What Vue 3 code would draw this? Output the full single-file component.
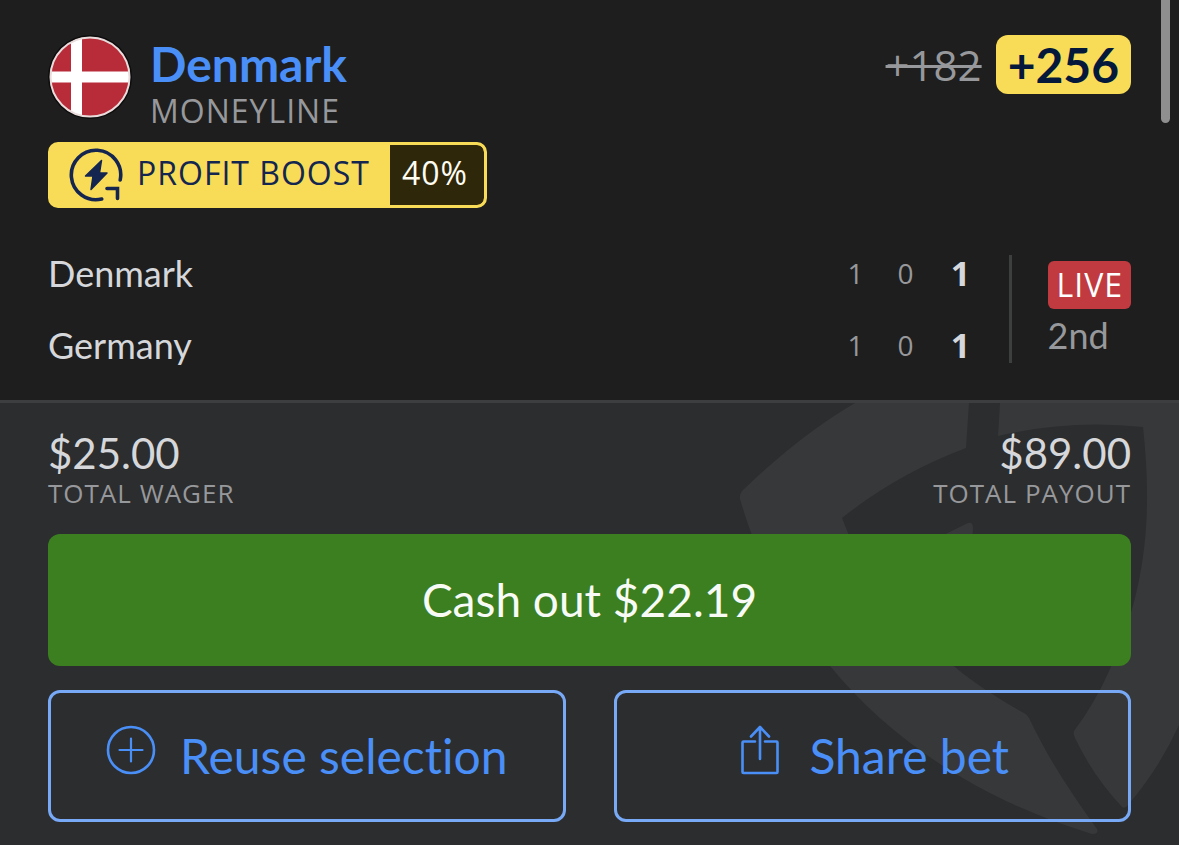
<template>
  <main class="bet-card">
    <section class="selection">
      <header class="selection-head">
        <svg class="flag" viewBox="0 0 84 84" role="img" aria-label="Flag of Denmark">
          <defs>
            <clipPath id="flag-clip"><circle cx="42" cy="42" r="40" /></clipPath>
          </defs>
          <circle cx="42" cy="42" r="42" fill="#0c0c0c" />
          <g clip-path="url(#flag-clip)">
            <rect width="84" height="84" fill="#b82b38" />
            <path d="M23 0h11v84H23zM0 36.500h84v11H0z" fill="#fff" />
          </g>
          <circle cx="42" cy="42" r="39.500" fill="none" stroke="#e9dcdc" stroke-width="2" />
        </svg>
        <div class="pick">
          <h1 class="pick-name">{{ bet.pick }}</h1>
          <p class="caption market">{{ bet.market }}</p>
        </div>
        <div class="odds">
          <s class="odds-old">{{ bet.oldOdds }}</s>
          <strong class="odds-new">{{ bet.newOdds }}</strong>
        </div>
      </header>

      <div class="boost">
        <span class="boost-label">
          <svg class="boost-icon" viewBox="0 0 56 56" fill="none" stroke="#14264f" aria-hidden="true">
            <path d="M32.700 52A24.700 24.700 0 1 1 51.200 33" stroke-width="3.600" stroke-linecap="round" />
            <path d="M38 41.500h10.500v10" stroke-width="3.600" stroke-linecap="round" stroke-linejoin="miter" />
            <path d="M32.500 13.500 16.500 29H24l-2 13.500L38 26h-7.500z" fill="#14264f" stroke-width="1.500" stroke-linejoin="round" />
          </svg>
          <span class="caption">PROFIT BOOST</span>
        </span>
        <span class="caption boost-value">{{ bet.boost }}</span>
      </div>

      <div class="game">
        <table class="scores">
          <tbody>
            <tr v-for="team in teams" :key="team.name">
              <th scope="row">{{ team.name }}</th>
              <td v-for="(score, i) in team.periods" :key="i" class="period">{{ score }}</td>
              <td class="total">{{ team.total }}</td>
            </tr>
          </tbody>
        </table>
        <div class="status">
          <span class="caption live">LIVE</span>
          <span class="half">2nd</span>
        </div>
      </div>
    </section>

    <section class="summary">
      <svg class="watermark" viewBox="700 403 479 442" fill="#373839" aria-hidden="true">
        <path d="M855 403Q800 435 742 491Q739 495 740 499C757 558 785 614 830 666C892 741 978 799 1092 834Q1099 834 1097 829C1072 794 1050 762 1029 718Q1027 714 1022 712C998 698 975 684 955 667C897 631 864 576 842 518Q897 474 966 448L969 403Z" />
        <path d="M920 548Q944 534 968 523Q973 522 973 528L972 548Z" />
        <path d="M1000 403L998 436Q1070 419 1143 427C1152 510 1148 586 1110 669Q1095 703 1074 731Q1073 734 1075 738Q1093 776 1122 807Q1125 809 1128 805Q1159 769 1179 725V403Z" />
      </svg>
      <dl class="amounts">
        <div v-for="item in amounts" :key="item.label" class="amount">
          <dt class="caption amount-label">{{ item.label }}</dt>
          <dd>{{ item.value }}</dd>
        </div>
      </dl>
      <button type="button" class="cash-out">Cash out {{ bet.cashOut }}</button>
      <div class="actions">
        <button type="button" class="action">
          <svg class="action-icon" viewBox="0 0 50 50" fill="none" stroke="currentColor" stroke-width="2.600" stroke-linecap="round" aria-hidden="true">
            <circle cx="25" cy="25" r="23" />
            <path d="M25 13.500v23M13.500 25h23" stroke-width="2.200" />
          </svg>
          <span>Reuse selection</span>
        </button>
        <button type="button" class="action">
          <svg class="action-icon" viewBox="0 0 50 50" fill="none" stroke="currentColor" stroke-width="2.600" stroke-linecap="round" stroke-linejoin="round" aria-hidden="true">
            <path d="M20 16.500H8.500Q7.500 16.500 7.500 17.500V47Q7.500 48 8.500 48H41.500Q42.500 48 42.500 47V17.500Q42.500 16.500 41.500 16.500H30" />
            <path d="M25 34V2.500M16 11.500l9-9.500 9 9.500" />
          </svg>
          <span>Share bet</span>
        </button>
      </div>
    </section>
    <span class="scroll-thumb" aria-hidden="true"></span>
  </main>
</template>

<script setup>
const bet = {
  pick: 'Denmark',
  market: 'MONEYLINE',
  oldOdds: '+182',
  newOdds: '+256',
  boost: '40%',
  cashOut: '$22.19'
}

const teams = [
  { name: 'Denmark', periods: [1, 0], total: 1 },
  { name: 'Germany', periods: [1, 0], total: 1 }
]

const amounts = [
  { label: 'TOTAL WAGER', value: '$25.00' },
  { label: 'TOTAL PAYOUT', value: '$89.00' }
]
</script>

<style>
body {
  margin: 0;
  background: #2c2d2e;
}
</style>

<style scoped>
.bet-card {
  position: relative;
  font-family: Lato, 'Open Sans', sans-serif;
  font-variant-ligatures: none;
  color: #d5d7da;
}

.caption {
  font-family: 'Open Sans', sans-serif;
  font-size: 32px;
  line-height: 36px;
  letter-spacing: 1px;
  font-weight: 400;
}

.selection {
  padding: 35px 48px 19px;
  background: #1e1e1e;
  border-bottom: 3px solid #3d3e40;
}

.selection-head {
  display: flex;
  align-items: flex-start;
}

.flag {
  width: 84px;
  height: 84px;
  flex: none;
}

.pick {
  flex: 1;
  margin-left: 18px;
}

.pick-name {
  margin: 0;
  font-size: 48px;
  line-height: 58px;
  font-weight: 700;
  color: #4a8ff7;
}

.market {
  margin: 0;
  color: #97989b;
}

.odds {
  display: flex;
  align-items: center;
  gap: 14px;
  font-size: 48px;
  line-height: 59px;
}

.odds-old {
  font-family: 'Open Sans', sans-serif;
  font-size: 42px;
  color: #97989b;
  text-decoration-thickness: 3px;
}

.odds-new {
  padding: 0 12px;
  border-radius: 12px;
  background: #f8dc57;
  color: #04183b;
}

.boost {
  display: flex;
  width: fit-content;
  margin-top: 13px;
  border: 3px solid #f8dc57;
  border-radius: 10px;
  background: #f8dc57;
  overflow: hidden;
}

.boost-label {
  display: flex;
  align-items: center;
  gap: 12px;
  padding: 0 20px 0 18px;
  color: #14264f;
}

.boost-icon {
  width: 56px;
  height: 56px;
}

.boost-label .caption {
  padding-bottom: 4px;
}

.boost-value {
  padding: 0 16px 4px 12px;
  border-radius: 0 7px 7px 0;
  background: #2e270a;
  color: #fffdf2;
  line-height: 56px;
}

.game {
  display: flex;
  align-items: center;
  margin-top: 29px;
}

.scores {
  flex: 1;
  border-collapse: collapse;
}

.scores tr {
  height: 72px;
}

.scores th,
.scores td {
  padding: 0;
  font-size: 36px;
  font-weight: 400;
}

.scores th {
  text-align: left;
}

.scores .period {
  width: 50px;
  font-family: 'Open Sans', sans-serif;
  font-size: 28px;
  text-align: center;
  color: #97989b;
}

.scores .total {
  width: 60px;
  font-family: 'Open Sans', sans-serif;
  font-size: 34px;
  font-weight: 700;
  text-align: center;
}

.status {
  display: flex;
  flex-direction: column;
  align-items: flex-start;
  gap: 4px;
  margin-left: 18px;
  padding: 6px 0 6px 36px;
  border-left: 3px solid #3d3e40;
}

.live {
  padding: 0 8px 0 9px;
  border-radius: 6px;
  background: #c03a40;
  color: #fff;
  line-height: 48px;
}

.half {
  font-size: 36px;
  line-height: 44px;
  color: #97989b;
}

.summary {
  position: relative;
  padding: 26px 48px 23px;
  background: #2c2d2e;
}

.watermark {
  position: absolute;
  top: 0;
  right: 0;
  height: 100%;
}

.amounts {
  position: relative;
  display: flex;
  justify-content: space-between;
  margin: 0 0 25px;
}

.amount {
  display: flex;
  flex-direction: column-reverse;
}

.amount:last-child {
  text-align: right;
}

.amount dd {
  margin: 0;
  font-size: 42px;
  line-height: 48px;
}

.amount-label {
  font-size: 26px;
  line-height: 32px;
  color: #97989b;
}

.cash-out {
  position: relative;
  width: 100%;
  padding: 0;
  border: 0;
  border-radius: 12px;
  background: #3b7f20;
  color: #f7faf5;
  font: inherit;
  font-size: 46px;
  line-height: 132px;
}

.actions {
  position: relative;
  display: grid;
  grid-template-columns: 1fr 1fr;
  gap: 48px;
  margin-top: 24px;
}

.action {
  display: flex;
  align-items: center;
  justify-content: center;
  gap: 24px;
  padding: 0;
  border: 3px solid #78a9f7;
  border-radius: 12px;
  background: transparent;
  color: #4a8ff7;
  font: inherit;
  font-size: 48px;
  line-height: 126px;
}

.action-icon {
  width: 50px;
  height: 50px;
  margin-bottom: 12px;
}

.scroll-thumb {
  position: absolute;
  top: 0;
  right: 9px;
  width: 9px;
  height: 123px;
  border-radius: 0 0 5px 5px;
  background: #8f8f8f;
}
</style>
